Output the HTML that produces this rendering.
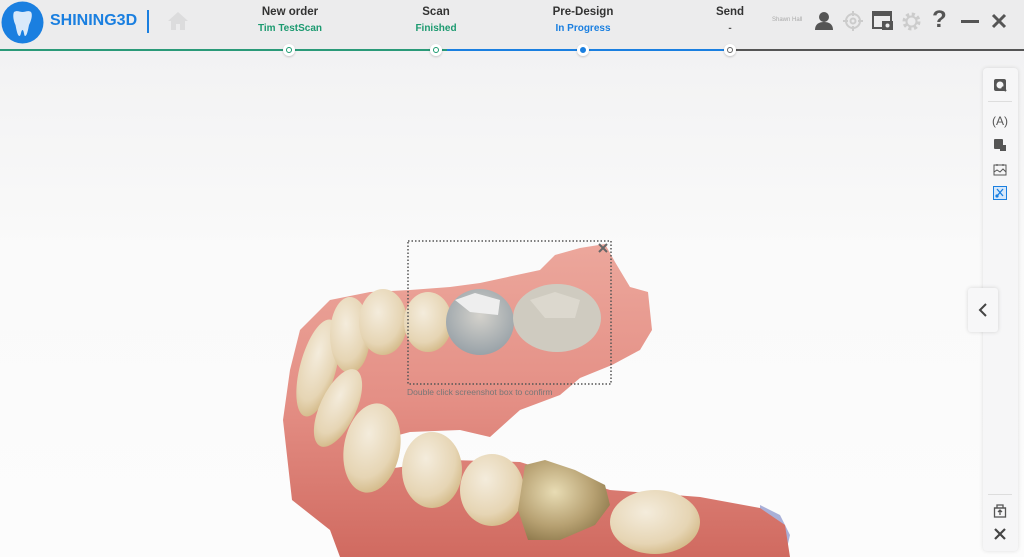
<!DOCTYPE html>
<html><head><meta charset="utf-8"><style>
*{margin:0;padding:0;box-sizing:border-box}
body{width:1024px;height:557px;overflow:hidden;font-family:"Liberation Sans",sans-serif;background:#fafafa;position:relative}
.top{position:absolute;left:0;top:0;width:1024px;height:51px;background:#ececed}
.bg{position:absolute;left:0;top:51px;width:1024px;height:506px;background:linear-gradient(#f2f2f3,#fafafa 40%,#fcfcfc)}
.step{position:absolute;top:6px;text-align:center;width:120px;font-weight:bold}
.step .a{font-size:11.5px;color:#333}
.step .b{font-size:10px;margin-top:5px}
.dot{position:absolute;top:44px;width:12px;height:12px;border-radius:50%;background:#fff;box-shadow:0 1px 2px rgba(0,0,0,.2)}
.dot i{position:absolute;left:3px;top:3px;width:6px;height:6px;border-radius:50%;border:1.5px solid}
.panel{position:absolute;left:983px;top:68px;width:35px;height:483px;background:#f6f6f7;border-radius:4px;box-shadow:0 0 4px rgba(0,0,0,.12)}
.tab{position:absolute;left:968px;top:288px;width:30px;height:44px;background:#f7f7f8;border-radius:3px;box-shadow:0 0 4px rgba(0,0,0,.15)}
.ic{position:absolute;color:#555;font-size:12px}
</style></head><body>
<div class="top"></div>
<div class="bg"></div>
<svg style="position:absolute;left:1px;top:1px" width="43" height="43" viewBox="0 0 43 43"><circle cx="21.5" cy="21.5" r="21" fill="#1a7fe0"/><path d="M13 11c3-2 6 0 8.5 0s6-2 8.5 0c2 3 0 9-2 13-1 5-2 11-4 11-1 0-1-6-2.5-6s-1.5 6-3 6c-2 0-3-6-4-11-2-4-3-10-1.5-13z" fill="#d8e9fa"/></svg>
<div style="position:absolute;left:50px;top:12px;font-size:16px;font-weight:bold;color:#1a7fe0">SHINING3D</div>
<div style="position:absolute;left:147px;top:10px;width:2px;height:23px;background:#1a7fe0"></div>
<svg style="position:absolute;left:167px;top:11px" width="22" height="20" viewBox="0 0 22 20"><path d="M11 1L1 10h3v9h5v-6h4v6h5v-9h3z" fill="#dcdcdd"/></svg>
<div class="step" style="left:230px"><div class="a">New order</div><div class="b" style="color:#1c9a70">Tim TestScan</div></div>
<div class="step" style="left:376px"><div class="a">Scan</div><div class="b" style="color:#1c9a70">Finished</div></div>
<div class="step" style="left:523px"><div class="a">Pre-Design</div><div class="b" style="color:#1a7fe0">In Progress</div></div>
<div class="step" style="left:670px"><div class="a">Send</div><div class="b" style="color:#555">-</div></div>
<div style="position:absolute;left:0;top:49px;width:447px;height:1.5px;background:#2a9a78"></div>
<div style="position:absolute;left:447px;top:49px;width:283px;height:1.5px;background:#1a7fe0"></div>
<div style="position:absolute;left:730px;top:49px;width:294px;height:1.5px;background:#555"></div>
<div class="dot" style="left:283px"><i style="border-color:#1c9a70"></i></div>
<div class="dot" style="left:430px"><i style="border-color:#1c9a70"></i></div>
<div class="dot" style="left:577px"><i style="border-color:#1a7fe0;background:#1a7fe0"></i></div>
<div class="dot" style="left:724px"><i style="border-color:#666"></i></div>
<div style="position:absolute;left:772px;top:17px;font-size:6px;color:#aaa">Shawn Hall</div>
<svg style="position:absolute;left:814px;top:11px" width="20" height="20" viewBox="0 0 20 20"><circle cx="10" cy="6" r="5" fill="#555"/><path d="M1 19c0-6 4-8 9-8s9 2 9 8z" fill="#555"/></svg>
<svg style="position:absolute;left:842px;top:10px" width="22" height="22" viewBox="0 0 22 22" fill="none" stroke="#ccc" stroke-width="2"><circle cx="11" cy="11" r="7"/><circle cx="11" cy="11" r="2.5"/><path d="M11 1v5M11 16v5M1 11h5M16 11h5"/></svg>
<svg style="position:absolute;left:872px;top:11px" width="22" height="20" viewBox="0 0 22 20"><rect x="1" y="1" width="18" height="16" fill="none" stroke="#555" stroke-width="2"/><rect x="1" y="1" width="18" height="4" fill="#555"/><rect x="10" y="10" width="11" height="9" fill="#555"/><circle cx="15.5" cy="14.5" r="2" fill="#ececed"/></svg>
<svg style="position:absolute;left:901px;top:11px" width="21" height="21" viewBox="0 0 21 21"><circle cx="10.5" cy="10.5" r="7" fill="none" stroke="#ccc" stroke-width="4" stroke-dasharray="3 2.5"/><circle cx="10.5" cy="10.5" r="5" fill="none" stroke="#ccc" stroke-width="2"/></svg>
<div style="position:absolute;left:932px;top:6px;font-size:24px;font-weight:bold;color:#555">?</div>
<div style="position:absolute;left:961px;top:20px;width:18px;height:3px;background:#555"></div>
<svg style="position:absolute;left:991px;top:13px" width="16" height="16" viewBox="0 0 16 16"><path d="M2 2L14 14M14 2L2 14" stroke="#555" stroke-width="3"/></svg>
<svg style="position:absolute;left:0;top:0" width="1024" height="557" viewBox="0 0 1024 557">
<defs>
<linearGradient id="gum" x1="0" y1="0" x2="0" y2="1"><stop offset="0" stop-color="#eca79c"/><stop offset=".5" stop-color="#e48f85"/><stop offset="1" stop-color="#d06a60"/></linearGradient>
<radialGradient id="tooth" cx=".4" cy=".35" r=".7"><stop offset="0" stop-color="#f4ecdc"/><stop offset=".7" stop-color="#e6d5b4"/><stop offset="1" stop-color="#d2b886"/></radialGradient>
<radialGradient id="gold" cx=".4" cy=".4" r=".7"><stop offset="0" stop-color="#e8dcb4"/><stop offset=".6" stop-color="#b7a172"/><stop offset="1" stop-color="#8a7548"/></radialGradient>
<radialGradient id="grey" cx=".5" cy=".4" r=".7"><stop offset="0" stop-color="#d4d2cc"/><stop offset="1" stop-color="#8f9aa2"/></radialGradient>
</defs>
<path d="M760 505L780 515L790 535L785 557L760 557Z" fill="#a9b0d8"/>
<path d="M300 330L330 300L370 292L410 290L450 287L480 283L540 270L555 255L580 248L605 244L615 262L630 287L648 292L652 330L640 350L612 365L580 378L560 395L520 410L490 437L460 430L410 432L380 440L360 462L380 470L450 460L520 462L610 490L700 497L760 508L785 525L790 557L340 557L330 530L292 500L283 420L290 370Z" fill="url(#gum)"/>
<ellipse cx="318" cy="368" rx="18" ry="50" fill="url(#tooth)" transform="rotate(15 318 368)"/>
<ellipse cx="350" cy="335" rx="20" ry="38" fill="url(#tooth)"/>
<ellipse cx="383" cy="322" rx="24" ry="33" fill="url(#tooth)"/>
<ellipse cx="428" cy="322" rx="24" ry="30" fill="url(#tooth)"/>
<ellipse cx="480" cy="322" rx="34" ry="33" fill="url(#grey)"/>
<path d="M455 300L475 293L500 300L498 315L470 312Z" fill="#eee"/>
<ellipse cx="557" cy="318" rx="44" ry="34" fill="#cfcbc0"/>
<path d="M530 300L555 292L580 300L575 318L545 318Z" fill="#dcd8ce"/>
<ellipse cx="338" cy="408" rx="18" ry="42" fill="url(#tooth)" transform="rotate(25 338 408)"/>
<ellipse cx="372" cy="448" rx="28" ry="45" fill="url(#tooth)" transform="rotate(10 372 448)"/>
<ellipse cx="432" cy="470" rx="30" ry="38" fill="url(#tooth)"/>
<ellipse cx="492" cy="490" rx="32" ry="36" fill="url(#tooth)"/>
<path d="M525 465L545 460L575 470L605 485L610 505L595 525L560 540L528 540L518 510Z" fill="url(#gold)"/>
<ellipse cx="655" cy="522" rx="45" ry="32" fill="url(#tooth)"/>
<rect x="408" y="241" width="203" height="143" fill="none" stroke="#555" stroke-width="1.5" stroke-dasharray="1.5 2"/>
<path d="M599 244l8 8M607 244l-8 8" stroke="#666" stroke-width="2"/>
<text x="407" y="395" font-size="8.5" fill="#777" font-family="Liberation Sans">Double click screenshot box to confirm</text>
</svg>
<div class="panel"></div>
<svg style="position:absolute;left:994px;top:79px" width="13" height="13" viewBox="0 0 13 13"><rect x="0" y="0" width="12" height="12" rx="2" fill="#555"/><circle cx="6" cy="6" r="3.5" fill="#f6f6f7"/><path d="M8 8l4 4" stroke="#555" stroke-width="2"/></svg>
<div style="position:absolute;left:988px;top:101px;width:24px;height:1px;background:#ddd"></div>
<div class="ic" style="left:992px;top:114px">(A)</div>
<svg style="position:absolute;left:994px;top:139px" width="12" height="12" viewBox="0 0 12 12"><rect x="0" y="0" width="9" height="10" rx="1" fill="#555"/><rect x="6" y="6" width="6" height="6" fill="#555"/></svg>
<svg style="position:absolute;left:993px;top:163px" width="14" height="13" viewBox="0 0 14 13" fill="none" stroke="#555"><rect x="1" y="2" width="12" height="10"/><path d="M1 9l3-2 3 2 3-3 3 3M4 1v2M10 1v2"/></svg>
<svg style="position:absolute;left:993px;top:186px" width="14" height="14" viewBox="0 0 14 14"><rect x=".5" y=".5" width="13" height="13" fill="#d7e8fa" stroke="#1a7fe0"/><path d="M4 3l6 7M10 3l-6 7" stroke="#1a7fe0" stroke-width="1.3"/><circle cx="4" cy="10" r="1.6" fill="#1a7fe0"/></svg>
<div class="tab"></div>
<svg style="position:absolute;left:978px;top:303px" width="10" height="14" viewBox="0 0 10 14"><path d="M8 1L2 7l6 6" fill="none" stroke="#444" stroke-width="2"/></svg>
<div style="position:absolute;left:988px;top:494px;width:24px;height:1px;background:#ddd"></div>
<svg style="position:absolute;left:993px;top:503px" width="14" height="15" viewBox="0 0 14 15" fill="none" stroke="#555" stroke-width="1.3"><rect x="1.5" y="5" width="11" height="9"/><path d="M4 5V2h6v3M1 5h12M7 7v5M5 9l2-2 2 2"/></svg>
<svg style="position:absolute;left:994px;top:528px" width="12" height="12" viewBox="0 0 12 12"><path d="M1 1l10 10M11 1L1 11" stroke="#444" stroke-width="2.2"/></svg>
</body></html>
